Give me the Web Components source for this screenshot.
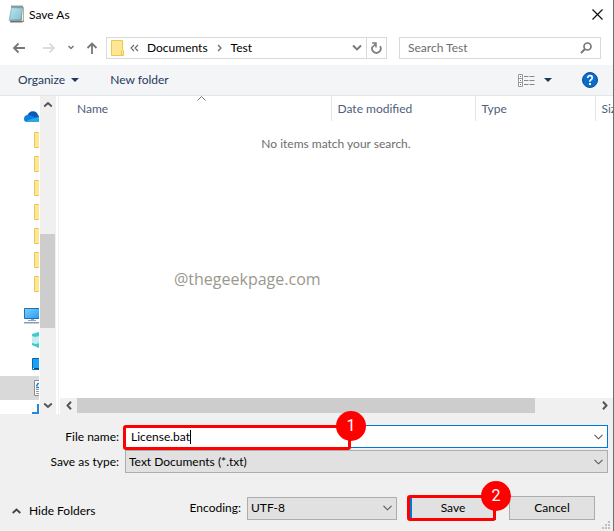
<!DOCTYPE html>
<html lang="en">
<head>
<meta charset="utf-8">
<title>Save As</title>
<style>
html, body { height: 100%; margin: 0; }
body { font: 12px/16px Lato, "Open Sans", sans-serif; color: #000; background: #fff; overflow: hidden; }
</style>
</head>
<body>
<save-dialog></save-dialog>

<template id="t-dialog">
<style>
:host { display: flex; flex-direction: column; height: 100%; box-sizing: border-box; border-right: 1px solid #6e6e6e; background: #fff; }
.main { flex: 1; display: flex; min-height: 0; background: #fff; }
</style>
<title-bar>Save As</title-bar>
<address-row></address-row>
<command-bar></command-bar>
<div class="main">
  <nav-pane></nav-pane>
  <file-list></file-list>
</div>
<dialog-footer></dialog-footer>
</template>

<template id="t-title">
<style>
:host { display: flex; align-items: center; height: 30px; padding: 0 10px 0 8px; box-sizing: border-box; }
span { flex: 1; margin-left: 4px; }
button { border: 0; padding: 0; background: none; width: 11px; height: 11px; margin-bottom: 2px; }
svg { display: block; }
.app { margin-bottom: 2px; }
</style>
<svg class="app" width="17" height="18" viewBox="0 0 17 18">
  <defs><linearGradient id="g" x1="0" y1="0" x2="1" y2="1"><stop offset="0" stop-color="#b5e2ec"/><stop offset="1" stop-color="#5ba5bc"/></linearGradient></defs>
  <path d="M4 2.500H16V16.500L14 17.500H2Z" fill="#7d705a"/>
  <path d="M14.500 3H15.500V15.500L13.500 16.500Z" fill="#f4f0e4"/>
  <path d="M3.500 2H14.500L12.800 15.500H1Z" fill="url(#g)" stroke="#7fb6c5" stroke-width=".6"/>
  <path d="M4 5H13.500M3.700 7H13.300M3.300 9H13M3 11H12.800M2.600 13H12.500" stroke="#d3eef4" stroke-width=".7"/>
  <path d="M3.500 1.500H15" stroke="#444" stroke-width="2" stroke-dasharray="1 1"/>
</svg>
<span><slot></slot></span>
<button aria-label="Close"><svg width="11" height="11" viewBox="0 0 11 11"><path d="M.5.5l10 10M10.500.5l-10 10" stroke="#111" stroke-width="1.200"/></svg></button>
</template>

<template id="t-address">
<style>
:host { display: flex; align-items: center; height: 35px; padding: 0 12px; box-sizing: border-box; }
button { border: 0; padding: 0; background: none; display: block; font: inherit; }
svg { display: block; }
.nav { display: flex; align-items: center; gap: 12px; width: 94px; }
.nav .back { margin-right: 4px; }
.path { flex: 1; display: flex; align-items: center; height: 22px; box-sizing: border-box; border: 1px solid #d9d9d9; padding-left: 4px; }
.path .a { margin-left: 6px; }
.path .b { margin-left: 8px; }
.path .c { margin: 0 9px; }
.fill { flex: 1; }
.refresh { margin-left: 4px; width: 20px; height: 20px; border-left: 1px solid #d9d9d9; display: grid; place-items: center; }
.search { display: flex; align-items: center; width: 202px; height: 22px; box-sizing: border-box; border: 1px solid #d9d9d9; margin-left: 12px; padding: 0 8px; }
input { flex: 1; min-width: 0; border: 0; outline: 0; padding: 0; background: none; font: inherit; }
input::placeholder { color: #6d6d6d; opacity: 1; }
</style>
<div class="nav">
  <button class="back" aria-label="Back"><svg width="14" height="12" viewBox="0 0 14 12"><path d="M13 6H2M6.500 1.500L2 6l4.500 4.500" fill="none" stroke="#777" stroke-width="1.800"/></svg></button>
  <button aria-label="Forward"><svg width="14" height="12" viewBox="0 0 14 12"><path d="M1 6H12M7.500 1.500L12 6l-4.500 4.500" fill="none" stroke="#dcdcdc" stroke-width="1.800"/></svg></button>
  <button aria-label="Recent locations"><svg width="6" height="5" viewBox="0 0 6 5"><path d="M.5 1L3 3.500 5.500 1" fill="none" stroke="#777" stroke-width="1.500"/></svg></button>
  <button aria-label="Up"><svg width="12" height="12" viewBox="0 0 12 12"><path d="M6 12V2M1.500 6L6 1.500 10.500 6" fill="none" stroke="#777" stroke-width="1.800"/></svg></button>
</div>
<div class="path">
  <svg width="13" height="16" viewBox="0 0 13 16"><path d="M.5.5H11.500V9.500L12.500 10.500V15.500H.5Z" fill="#ffe694" stroke="#ecc94c"/><path d="M10.500 15V10.500L11.500 9.500" fill="none" stroke="#ecc94c"/></svg>
  <svg class="a" width="9" height="8" viewBox="0 0 9 8"><path d="M4 1L1 4l3 3M8 1L5 4l3 3" fill="none" stroke="#666" stroke-width="1.100"/></svg>
  <button class="b">Documents</button>
  <svg class="c" width="5" height="8" viewBox="0 0 5 8"><path d="M1 1l3 3-3 3" fill="none" stroke="#777" stroke-width="1.500"/></svg>
  <button>Test</button>
  <span class="fill"></span>
  <button aria-label="Previous locations"><svg width="10" height="7" viewBox="0 0 10 7"><path d="M1 1.500l4 4 4-4" fill="none" stroke="#777" stroke-width="1.900"/></svg></button>
  <button class="refresh" aria-label="Refresh"><svg width="11" height="12" viewBox="0 0 11 12"><path d="M1.800 4.200A4.300 4.300 0 1 0 9 4.200" fill="none" stroke="#808080" stroke-width="1.800"/><path d="M1 1H5V5.500M1.800 4.800L5 1.500" fill="none" stroke="#808080" stroke-width="1.500"/></svg></button>
</div>
<div class="search">
  <input type="search" placeholder="Search Test" aria-label="Search Test">
  <svg width="12" height="12" viewBox="0 0 12 12"><circle cx="7.500" cy="4.500" r="3.500" fill="none" stroke="#777" stroke-width="1.700"/><path d="M5 7L1 11" stroke="#777" stroke-width="2"/></svg>
</div>
</template>

<template id="t-command">
<style>
:host { display: flex; align-items: center; height: 31px; padding: 0 15px 0 18px; box-sizing: border-box; background: #f4f5f7; border-bottom: 1px solid #e3e5e8; color: #1e395b; }
button { border: 0; padding: 0; background: none; color: inherit; font: inherit; display: flex; align-items: center; gap: 6px; }
.new { margin-left: 31px; }
.org { width: 60px; justify-content: space-between; gap: 0; }
.views { margin-left: auto; gap: 9px; margin-right: 30px; }
.org { width: auto; gap: 6px; }
</style>
<button class="org">Organize <svg width="8" height="4" viewBox="0 0 8 4"><path d="M0 0H8L4 4Z" fill="#1e395b"/></svg></button>
<button class="new">New folder</button>
<button class="views" aria-label="Change your view"><svg width="17" height="13" viewBox="0 0 17 13"><path d="M.5.5H4.500V12.500H.5ZM.5 4.500H4.500M.5 8.500H4.500" fill="#fff" stroke="#999"/><path d="M2 2h1v1h-1z" fill="#777"/><path d="M2 6h1v1h-1z" fill="#388bd8"/><path d="M2 10h1v1h-1z" fill="#c33"/><path d="M6 2.500h4.500m1 0h5M6 6.500h4.500m1 0h5M6 10.500h4.500m1 0h5" stroke="#888"/></svg><svg width="8" height="4" viewBox="0 0 8 4"><path d="M0 0H8L4 4Z" fill="#1e395b"/></svg></button>
<button aria-label="Help"><svg width="16" height="16" viewBox="0 0 16 16"><circle cx="8" cy="8" r="7.500" fill="#0a6ccb" stroke="#084f9c"/><path d="M5.700 6Q5.700 3.700 8 3.700T10.300 5.800Q10.300 7 9 7.800T8 9.800" fill="none" stroke="#fff" stroke-width="1.700"/><path d="M7 11h2v2h-2z" fill="#fff"/></svg></button>
</template>

<template id="t-scroll">
<style>
:host { display: flex; background: #f0f0f0; }
:host([vertical]) { flex-direction: column; width: 16px; }
:host(:not([vertical])) { height: 16px; }
button { border: 0; padding: 0; background: none; width: 17px; height: 15px; flex: none; display: grid; place-items: center; }
:host([vertical]) button { width: 15px; height: 17px; }
.before { flex: var(--before); }
.thumb { flex: var(--thumb); background: #cdcdcd; }
.after { flex: var(--after); }
:host([vertical]) .thumb { width: 15px; }
:host(:not([vertical])) .thumb { height: 15px; }
:host([vertical]) svg { transform: rotate(90deg); }
</style>
<button aria-label="Scroll back"><svg width="6" height="9" viewBox="0 0 6 9"><path d="M5 .7L1.500 4.500 5 8.300" fill="none" stroke="#555" stroke-width="2"/></svg></button>
<div class="before"></div><div class="thumb"></div><div class="after"></div>
<button aria-label="Scroll forward"><svg width="6" height="9" viewBox="0 0 6 9"><path d="M1 .7L4.500 4.500 1 8.300" fill="none" stroke="#555" stroke-width="2"/></svg></button>
</template>

<template id="t-nav">
<style>
:host { display: flex; flex: none; width: 58px; border-right: 1px solid #f0f0f0; }
.tree { width: 40px; padding-top: 8px; box-sizing: border-box; overflow: hidden; }
.row { height: 24px; width: 39px; display: flex; align-items: center; justify-content: flex-end; }
.row.gap { margin-top: 8px; }
.row.on { background: #d9d9d9; }
svg { display: block; }
</style>
<div class="tree">
  <div class="row"><svg width="15" height="11" viewBox="0 0 15 11"><path d="M3 5Q5 0 9 .2T14 4l1 1V9H3Z" fill="#0a5bb5"/><path d="M0 8Q0 4 4 4Q7 3.500 10 6L15 8V11H3Q0 11 0 8Z" fill="#0f7fd8"/><path d="M2 10.500Q5 8.500 9 7.500T15 5.500V11H3Z" fill="#28a8ea"/></svg></div>
  <div id="folders"></div>
  <div class="row gap"><svg width="15" height="16" viewBox="0 0 15 16"><defs><linearGradient id="s" x2="1" y2="1"><stop stop-color="#7fd0ff"/><stop offset="1" stop-color="#1d9bf5"/></linearGradient></defs><path d="M.5.5H16V10.500H.5Z" fill="url(#s)" stroke="#2c6da3"/><path d="M7 11h3v1h2v1H4v-1h3z" fill="#8ba3bb"/><path d="M0 14h15v1.500H0z" fill="#8a9bb4"/></svg></div>
  <div class="row"><svg width="7" height="16" viewBox="0 0 7 16"><path d="M0 2L7 0V16L0 13Z" fill="#c5eeee"/><path d="M0 2L7 0V4L3 5 0 4ZM0 11L4 12 7 11V16L0 13Z" fill="#43c9ce"/></svg></div>
  <div class="row"><svg width="7" height="12" viewBox="0 0 7 12"><path d="M.5.5H8V11.500H.5Z" fill="#1aa0f5" stroke="#0868ad"/><path d="M1 10h6v1H1z" fill="#064a80"/><path d="M1 10h1v1H1z" fill="#fff"/></svg></div>
  <div class="row on"><svg width="5" height="16" viewBox="0 0 5 16"><path d="M.5.5H6V15.500H.5Z" fill="#fff" stroke="#8a8a8a"/><path d="M2 5.500h1l1-2h1M2 7.500h3" fill="none" stroke="#2384d4" stroke-width="1.500"/><path d="M2 9.500h3M2 11.500h3M2 13.500h3" stroke="#999"/></svg></div>
  <div class="row"><svg width="7" height="16" viewBox="0 0 7 16"><path d="M5 0H7V10H0V8H5Z" fill="#2a86d6"/></svg></div>
</div>
<scroll-strip vertical style="--before:121;--thumb:94;--after:69"></scroll-strip>
</template>

<template id="t-list">
<style>
:host { flex: 1; min-width: 0; display: flex; flex-direction: column; }
table { width: 100%; border-collapse: collapse; table-layout: fixed; color: #4c607a; }
th { font-weight: 400; text-align: left; height: 25px; padding: 0 0 0 6px; border-right: 1px solid #e5e5e5; white-space: nowrap; overflow: hidden; box-sizing: border-box; position: relative; }
th:first-child { padding-left: 18px; }
th:last-child { border-right: 0; }
th svg { position: absolute; left: 51%; top: 0; }
.d { width: 144px; } .t { width: 120px; } .s { width: 18px; }
.body { flex: 1; }
p { margin: 15px 0 0; text-align: center; color: #6d6d6d; }
.mark { margin: 117px 0 0 115px; text-align: left; font: 16px/20px "Open Sans", "Noto Sans", sans-serif; color: #9b988f; }
scroll-strip { margin-left: 1px; }
</style>
<table><thead><tr>
<th>Name<svg width="9" height="5" viewBox="0 0 9 5"><path d="M.5 4.500l4-4 4 4" fill="none" stroke="#777"/></svg></th>
<th class="d">Date modified</th><th class="t">Type</th><th class="s">Size</th>
</tr></thead></table>
<div class="body">
<p>No items match your search.</p>
<p class="mark">@thegeekpage.com</p>
</div>
<scroll-strip style="--before:0;--thumb:458;--after:61"></scroll-strip>
</template>

<template id="t-step">
<style>
:host { position: absolute; box-sizing: border-box; border: 3px solid #f00; border-radius: 3px; pointer-events: none; }
span { position: absolute; right: -18px; top: -17px; width: 30px; height: 30px; border-radius: 50%; background: #f00; color: #fff; font: 16px/30px Roboto, sans-serif; text-align: center; }
</style>
<span><slot></slot></span>
</template>

<template id="t-footer">
<style>
:host { display: flex; flex-direction: column; flex: none; background: #f0f0f0; padding: 11px 5px 0 12px; height: 117px; box-sizing: border-box; position: relative; }
.fields { display: grid; grid-template-columns: 107px 1fr; column-gap: 6px; row-gap: 2px; align-items: center; }
label { text-align: right; }
.box { display: grid; position: relative; }
.box > * { grid-area: 1 / 1; }
.box > svg { justify-self: end; align-self: center; margin-right: 5px; pointer-events: none; }
input, select { appearance: none; box-sizing: border-box; width: 100%; height: 23px; margin: 0; border: 1px solid #adadad; border-radius: 0; outline: 0; background: #e1e1e1; color: #000; font: inherit; padding: 0 20px 0 3px; }
input { background: #fff; border-color: #0078d7; padding-left: 5px; }
.caret { width: 1px; height: 14px; background: #000; margin-left: 65px; align-self: center; }
.actions { display: flex; align-items: center; gap: 13px; margin: 20px 13px 0 0; }
button { box-sizing: border-box; width: 86px; height: 24px; border: 1px solid #adadad; background: #e1e1e1; font: inherit; color: #000; padding: 0; }
.hide { border: 0; background: none; width: auto; display: flex; align-items: center; gap: 8px; margin: 6px auto 0 0; }
.enc { display: flex; align-items: center; gap: 6px; }
.enc .box { width: 150px; }
.save { position: relative; display: flex; }
.save button { border: 2px solid #0078d7; }
.one { left: -2px; top: 0; width: 228px; height: 25px; }
.two { left: -3px; top: -1px; right: 0; height: 26px; }
.grip { position: absolute; right: 3px; bottom: 2px; }
</style>
<div class="fields">
  <label for="name">File name:</label>
  <div class="box"><input id="name" value="License.bat"><span class="caret"></span><svg width="9" height="6" viewBox="0 0 9 6"><path d="M.5.8l4 4 4-4" fill="none" stroke="#555" stroke-width="1.100"/></svg><step-mark class="one">1</step-mark></div>
  <label for="type">Save as type:</label>
  <div class="box"><select id="type"><option>Text Documents (*.txt)</option></select><svg width="9" height="6" viewBox="0 0 9 6"><path d="M.5.8l4 4 4-4" fill="none" stroke="#555" stroke-width="1.100"/></svg></div>
</div>
<div class="actions">
  <button class="hide"><svg width="9" height="6" viewBox="0 0 9 6"><path d="M.7 5l3.800-3.500L8.300 5" fill="none" stroke="#444" stroke-width="1.800"/></svg>Hide Folders</button>
  <div class="enc"><label for="enc">Encoding:</label>
  <div class="box"><select id="enc"><option>UTF-8</option></select><svg width="9" height="6" viewBox="0 0 9 6"><path d="M.5.8l4 4 4-4" fill="none" stroke="#555" stroke-width="1.100"/></svg></div></div>
  <div class="save"><button>Save</button><step-mark class="two">2</step-mark></div>
  <button>Cancel</button>
</div>
<svg class="grip" width="8" height="8" viewBox="0 0 8 8"><path d="M6 0h2v2H6zM3 3h2v2H3zM6 3h2v2H6zM0 6h2v2H0zM3 6h2v2H3zM6 6h2v2H6z" fill="#bfbfbf"/></svg>
</template>

<script>
const define = (name, id, setup) => customElements.define(name, class extends HTMLElement {
  constructor() {
    super();
    const root = this.attachShadow({ mode: "open" });
    root.append(document.getElementById(id).content.cloneNode(true));
    if (setup) setup(root);
  }
});
define("scroll-strip", "t-scroll");
define("step-mark", "t-step");
define("title-bar", "t-title");
define("address-row", "t-address");
define("command-bar", "t-command");
define("nav-pane", "t-nav", root => {
  const folder = '<div class="row"><svg width="5" height="16" viewBox="0 0 5 16"><path d="M.5.5H6V15.500H.5Z" fill="#ffe694" stroke="#ecc94c"/></svg></div>';
  root.getElementById("folders").innerHTML = folder.repeat(7);
});
define("file-list", "t-list");
define("dialog-footer", "t-footer");
define("save-dialog", "t-dialog");
</script>
</body>
</html>
